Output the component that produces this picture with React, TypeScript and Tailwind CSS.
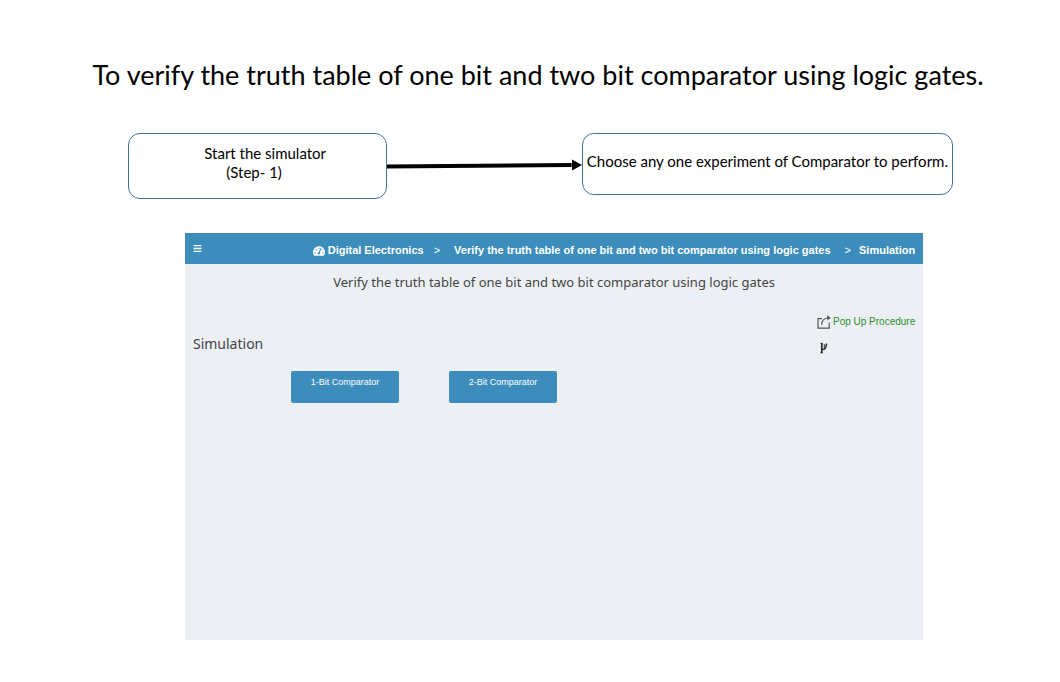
import { FaBars, FaTachometerAlt } from "react-icons/fa";

function ShareIcon() {
  return (
    <svg viewBox="0 0 14 14" className="h-3.5 w-3.5 text-[#555]" fill="none" stroke="currentColor" strokeWidth="1.2" aria-hidden="true">
      <path d="M5 3.6H1v9.6h11.2V7.5" />
      <path d="M4.8 9.8C4.6 5.8 6.8 3.4 11 3" />
      <path d="M10 .2 13.8 2.8 10.4 5.6Z" fill="currentColor" stroke="none" />
    </svg>
  );
}

function ForkIcon() {
  return (
    <svg viewBox="0 0 8 12" className="h-3 w-2 text-[#333]" fill="none" stroke="currentColor" aria-hidden="true">
      <path d="M1.8 1v10" strokeWidth="1.8" />
      <path d="M.5 1.4h2.2M.5 10.8h2.4" strokeWidth="1" />
      <path d="M1.8 7.4C5 7.6 6.6 5.8 6.5 1.6" strokeWidth="1.6" />
      <path d="M4.3 2.2v4" strokeWidth="1" />
    </svg>
  );
}

function Arrow() {
  return (
    <div className="mt-6 flex h-4 min-w-0 flex-1 items-center" aria-hidden="true">
      <svg viewBox="0 0 185 16" preserveAspectRatio="none" className="h-4 min-w-0 flex-1">
        <path d="M0 9.5 185 8" stroke="black" strokeWidth="4" />
      </svg>
      <svg viewBox="0 0 10 16" className="h-4 w-2.5">
        <path d="M0 2.5 10 8 0 13.5Z" fill="black" />
      </svg>
    </div>
  );
}

const experiments = ["1-Bit Comparator", "2-Bit Comparator"];

export default function App() {
  return (
    <main className="min-h-screen bg-white pt-[55px] pb-10 font-['Lato',sans-serif] text-black">
      <h1 className="pl-4 text-center text-[27px] leading-10">
        To verify the truth table of one bit and two bit comparator using logic gates.
      </h1>

      <section className="mt-[38px] flex items-start pr-[10.1%] pl-[12.1%] text-[15px]">
        <div className="h-[66px] w-[31.4%] rounded-xl border border-[#41719c] pt-2.5 pl-[75px] leading-[19px]">
          <p>Start the simulator</p>
          <p className="pl-[22px]">(Step- 1)</p>
        </div>
        <Arrow />
        <div className="flex h-[62px] w-[45%] items-center justify-center rounded-xl border border-[#41719c] pb-1.5">
          <p className="whitespace-nowrap">Choose any one experiment of Comparator to perform.</p>
        </div>
      </section>

      <section className="mt-[34px] mr-[12.9%] ml-[17.45%] min-h-[407px] bg-[#ecf0f5]">
        <header className="flex h-[31px] items-center justify-between bg-[#3c8dbc] px-2 font-['Liberation_Sans',sans-serif] text-white">
          <button type="button" aria-label="Toggle menu" className="text-[9px]">
            <FaBars />
          </button>
          <nav aria-label="Breadcrumb" className="flex items-center pt-1 text-[11px] font-bold whitespace-nowrap">
            <a href="#electronics" className="flex items-center gap-[3px]">
              <FaTachometerAlt className="text-xs" />
              Digital Electronics
            </a>
            <span className="mr-3.5 ml-2.5 font-normal">&gt;</span>
            <a href="#experiment">Verify the truth table of one bit and two bit comparator using logic gates</a>
            <span className="mr-2 ml-3.5 font-normal">&gt;</span>
            <a href="#simulation">Simulation</a>
          </nav>
        </header>

        <h2 className="mt-1.5 text-center font-['Noto_Sans',sans-serif] text-[13px] leading-6 text-[#444]">
          Verify the truth table of one bit and two bit comparator using logic gates
        </h2>

        <div className="mt-[18px] flex justify-between px-2">
          <h3 className="mt-5 font-['Noto_Sans',sans-serif] text-sm leading-6 text-[#444]">Simulation</h3>
          <div className="flex flex-col gap-2.5 font-['Liberation_Sans',sans-serif] text-[10px] leading-5">
            <a href="#procedure" className="flex items-center gap-0.5 text-[#2e8b2e]">
              <ShareIcon />
              Pop Up Procedure
            </a>
            <button type="button" aria-label="Show connections" className="self-start pl-[3px]">
              <ForkIcon />
            </button>
          </div>
        </div>

        <div className="mt-[15px] flex gap-[50px] pl-[106px]">
          {experiments.map((name) => (
            <button
              key={name}
              type="button"
              className="h-8 w-[108px] rounded-xs bg-[#3c8dbc] pb-2 font-['Liberation_Sans',sans-serif] text-[9px] text-white"
            >
              {name}
            </button>
          ))}
        </div>
      </section>
    </main>
  );
}
